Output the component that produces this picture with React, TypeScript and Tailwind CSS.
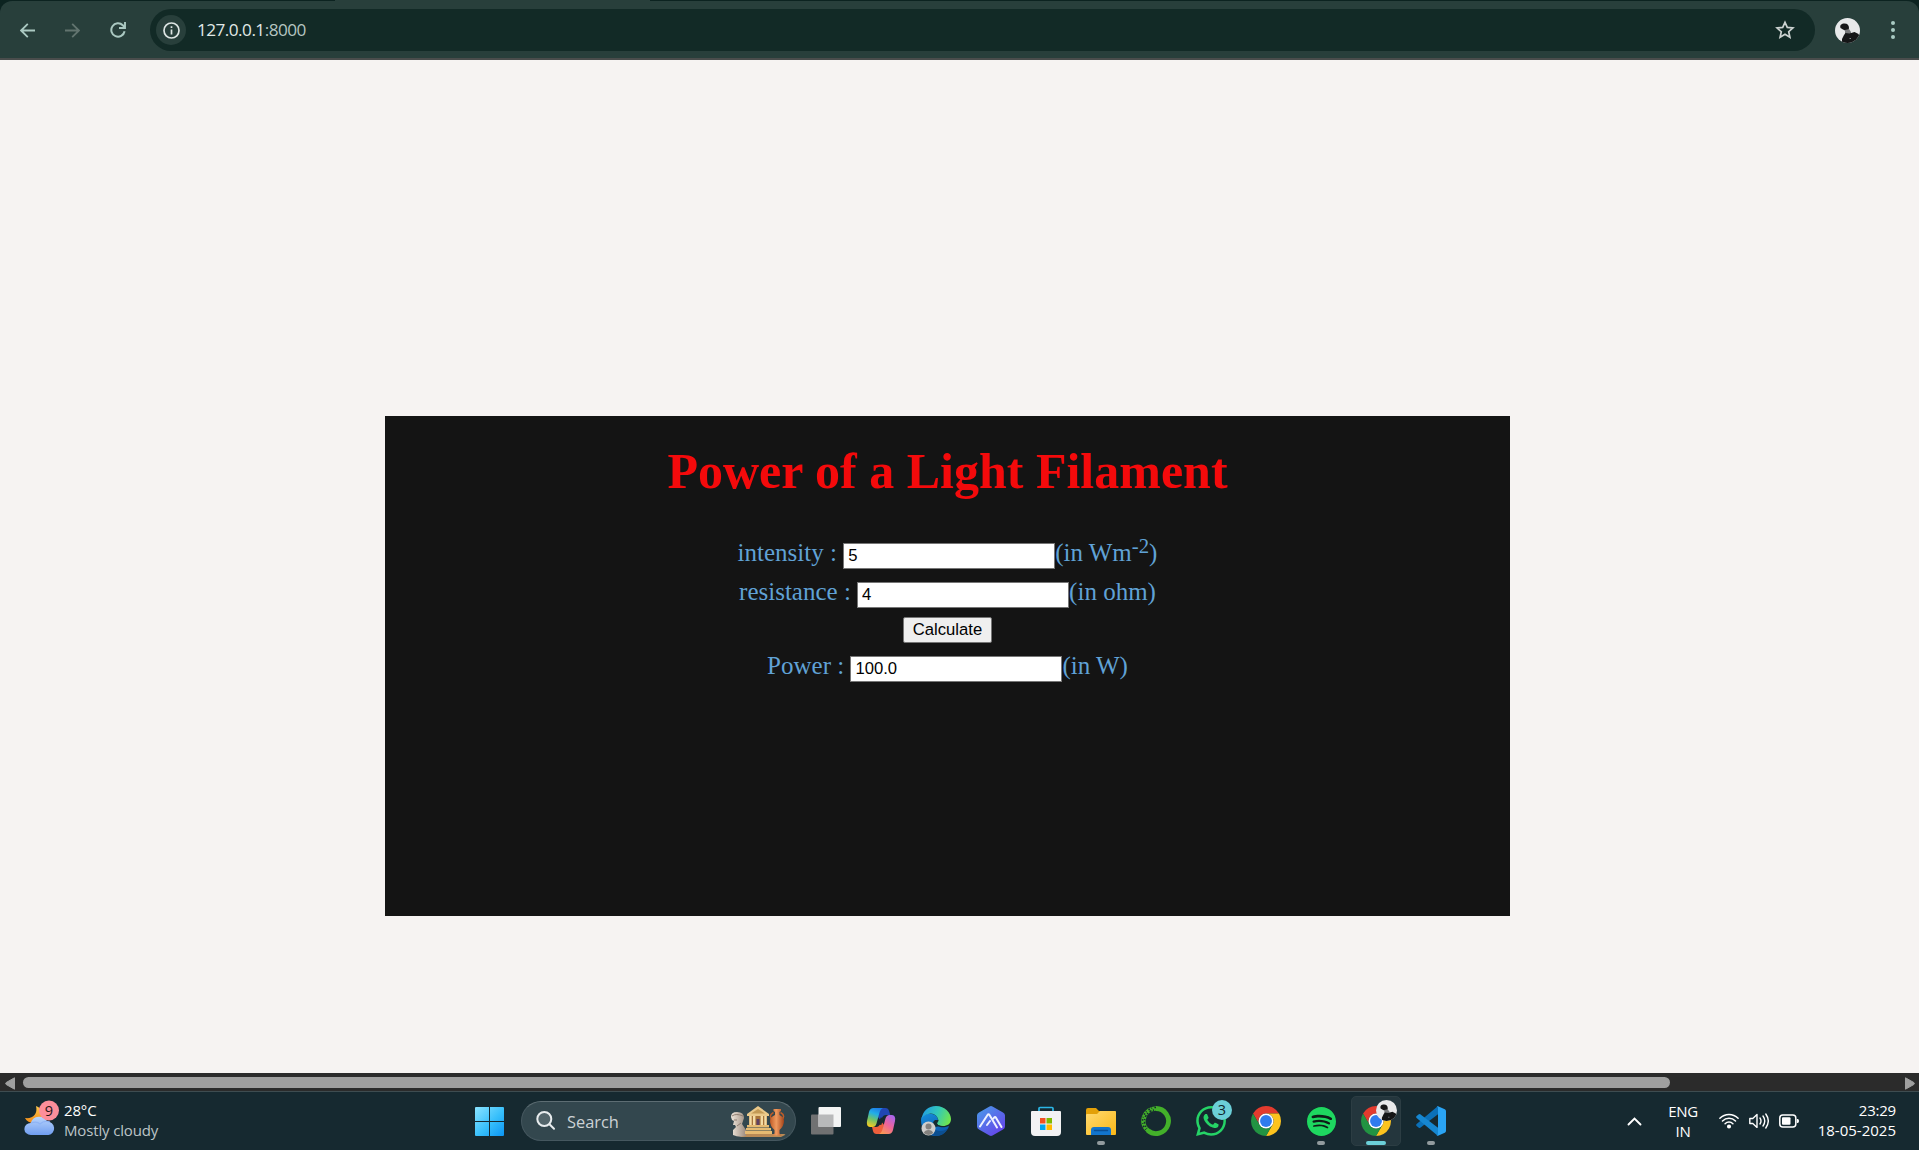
import React from "react";
import { SiSpotify, SiWhatsapp } from "react-icons/si";

function Toolbar() {
  return (
    <header className="flex h-[60px] shrink-0 flex-col bg-[#0c2320]">
      <div className="h-px shrink-0 pl-[335px]">
        <div className="h-px w-[315px] bg-[#283f3b]" />
      </div>
      <div className="flex h-[59px] items-center rounded-t-xl border-b-2 border-b-[#4a4d4c] bg-[#283f3b] pt-px">
        <svg className="ml-5 h-[15px] w-[15px] shrink-0" viewBox="0 0 15 15" fill="none" stroke="#abc9c2" strokeWidth="1.8">
          <path d="M15 7.5H1.6M7.8 .8 1.1 7.5l6.7 6.7" />
        </svg>
        <svg className="ml-[30px] h-[15px] w-[15px] shrink-0" viewBox="0 0 15 15" fill="none" stroke="#62746f" strokeWidth="1.8">
          <path d="M0 7.5h13.4M7.2 .8l6.7 6.7-6.7 6.7" />
        </svg>
        <svg className="ml-[29.5px] h-4 w-4 shrink-0" viewBox="0 0 16 16" fill="none" stroke="#abc9c2" strokeWidth="2">
          <path d="M14.6 9.3A6.7 6.7 0 1 1 12.8 3.3L14.5 5" />
          <path d="M15 0v6H9" strokeWidth="1.9" />
        </svg>
        <div className="ml-[24.5px] flex h-[42px] w-[1665px] shrink-0 items-center rounded-full bg-[#122a26] pl-[6px] pr-[20px]">
          <div className="flex h-[30px] w-[30px] items-center justify-center rounded-full bg-[#283f3b]">
            <svg className="h-[17px] w-[17px]" viewBox="0 0 17 17" fill="none" stroke="#dde5e3" strokeWidth="1.7">
              <circle cx="8.5" cy="8.5" r="7.5" />
              <path d="M8.5 7.4v5M8.5 4.2v1.8" />
            </svg>
          </div>
          <span className="ml-[11px] flex-1 whitespace-nowrap font-['Open_Sans',sans-serif] text-[17.2px] leading-[24px] tracking-[-0.54px] text-[#e1e9e7]">
            127.0.0.1<span className="text-[#b5c5c1]">:8000</span>
          </span>
          <svg className="h-5 w-5" viewBox="0 0 20 20" fill="none" stroke="#ccd3d1" strokeWidth="1.7">
            <path d="m10 2.4 2.3 5 5.6.6-4.2 3.7 1.2 5.5-4.9-2.9-4.9 2.9 1.2-5.5L2.1 8l5.6-.6Z" />
          </svg>
        </div>
        <Avatar className="ml-[20px] h-[25px] w-[25px] shrink-0" />
        <div className="ml-[30.5px] flex flex-col gap-[3px]">
          <i className="h-1 w-1 rounded-full bg-[#a9cbc3]" />
          <i className="h-1 w-1 rounded-full bg-[#a9cbc3]" />
          <i className="h-1 w-1 rounded-full bg-[#a9cbc3]" />
        </div>
      </div>
    </header>
  );
}

function Avatar({ className }: { className: string }) {
  return (
    <svg className={className + " overflow-hidden rounded-full"} viewBox="0 0 25 25">
      <rect width="25" height="25" fill="#e8e9ea" />
      <path d="M5.500 10c-1-3 1-4.500 4-4.500 3 0 4.500 2 4.500 4.500l-.5 2-3.500.5-2-1Z" fill="#171718" />
      <path d="M10 12l4-1 2 3v2h-6Z" fill="#77787a" />
      <path d="M7 25v-4l2-4 1.500-2 4 .5 5-1.500 4 2 1.500 4v5Z" fill="#151617" />
      <path d="M14.500 20.500h1.500" stroke="#85878a" />
    </svg>
  );
}

const label = "whitespace-pre text-[25px] leading-[28px] text-[#60a2d6]";

function Field({ name, value, unit, className }: { name: string; value: string; unit: React.ReactNode; className: string }) {
  return (
    <div className={"flex h-[31px] items-start justify-center " + className}>
      <span className={label}>{name} : </span>
      <input
        className="mt-[4px] h-[26px] w-[212px] border border-[#767676] bg-white px-[4px] font-['Liberation_Sans',sans-serif] text-[16.67px] leading-5 text-black"
        defaultValue={value}
      />
      <span className={label}>{unit}</span>
    </div>
  );
}

function Calculator() {
  return (
    <section className="ml-[385px] mt-[356px] flex h-[500px] w-[1125px] flex-col items-center bg-[#141414] font-['Liberation_Serif',serif]">
      <h1 className="mt-[27px] whitespace-nowrap text-[50px] font-bold leading-[56px] text-[#f40a0b]">Power of a Light Filament</h1>
      <Field
        className="mt-[40px]"
        name="intensity"
        value="5"
        unit={
          <>
            (in Wm<span className="relative top-[-8px] text-[20.8px] leading-none">-2</span>)
          </>
        }
      />
      <Field className="mt-[8px]" name="resistance" value="4" unit="(in ohm)" />
      <button className="mt-[8px] h-[26px] w-[89px] rounded-[2px] border border-[#767676] bg-[#efefef] font-['Liberation_Sans',sans-serif] text-[16.67px] leading-5 text-black">
        Calculate
      </button>
      <Field className="mt-[9px]" name="Power" value="100.0" unit="(in W)" />
    </section>
  );
}

function Scrollbar() {
  return (
    <div className="flex h-[18px] shrink-0 items-center bg-[#2b2b2b]">
      <svg className="ml-[5px] mt-[2px] h-[13px] w-[11px]" viewBox="0 0 11 13">
        <path d="M9.500 .8v11.400L1.200 7.500q-1.200-1 0-2Z" fill="#9f9f9f" stroke="#9f9f9f" />
      </svg>
      <div className="ml-[7px] h-[11px] w-[1647px] rounded-full bg-[#9f9f9f]" />
      <svg className="ml-auto mr-[4px] mt-[2px] h-[13px] w-[11px]" viewBox="0 0 11 13">
        <path d="M1.500 .8v11.400L9.800 7.500q1.200-1 0-2Z" fill="#9f9f9f" stroke="#9f9f9f" />
      </svg>
    </div>
  );
}

function Weather() {
  return (
    <div className="flex w-[475px] shrink-0 items-center">
      <svg className="mb-[5px] ml-[24px] h-10 w-9" viewBox="0 0 36 40">
        <defs>
          <linearGradient id="cloud" x1="0" y1="0" x2="0" y2="1">
            <stop offset="0" stopColor="#bad5fc" />
            <stop offset="1" stopColor="#6f9df0" />
          </linearGradient>
          <linearGradient id="moon" x1="0" y1="0" x2="0" y2="1">
            <stop offset="0" stopColor="#ffc84b" />
            <stop offset="1" stopColor="#f18a16" />
          </linearGradient>
        </defs>
        <path d="M12 7c2 8-3 13-11 12 3 6 12 7 17 1 3-5 0-11-6-13Z" fill="url(#moon)" />
        <path d="M7 36a6.500 6 0 0 1-.3-12 9 9 0 0 1 16.500-1.500A6.800 6.800 0 0 1 24.500 36Z" fill="url(#cloud)" />
        <path d="M7 24q6-2 9 1 4-4 10-2" fill="none" stroke="#8fb4f5" strokeWidth="1.200" />
        <circle cx="25" cy="11.500" r="10" fill="#fd8e9a" />
        <text x="25" y="16.800" textAnchor="middle" fontSize="14.500" fontFamily="Open Sans, sans-serif" fill="#271416">9</text>
      </svg>
      <div className="mb-[2px] ml-1 whitespace-nowrap font-['Open_Sans',sans-serif] text-[15px] leading-5 tracking-[-0.15px]">
        <div className="text-white">28°C</div>
        <div className="text-[#bcc4c7]">Mostly cloudy</div>
      </div>
    </div>
  );
}

function WindowsLogo() {
  return (
    <svg className="h-[29px] w-[29px] shrink-0" viewBox="0 0 29 29">
      <defs>
        <linearGradient id="win" x1="0" y1="0" x2="29" y2="29" gradientUnits="userSpaceOnUse">
          <stop stopColor="#8be3ff" />
          <stop offset=".55" stopColor="#37bffb" />
          <stop offset="1" stopColor="#0b95f3" />
        </linearGradient>
      </defs>
      <path d="M1 0h13v14H0V1Q0 0 1 0ZM15 0h13q1 0 1 1v13H15ZM0 15h14v14H1q-1 0-1-1ZM15 15h14v13q0 1-1 1H15Z" fill="url(#win)" />
    </svg>
  );
}

function SearchBox() {
  return (
    <div className="ml-[17px] flex h-10 w-[275px] shrink-0 items-center rounded-full border border-[#45575f] border-t-[#5d6d73] bg-[#33474e]">
      <svg className="ml-[14px] h-5 w-5" viewBox="0 0 20 20" fill="none" stroke="#e8ecee" strokeWidth="2" strokeLinecap="round">
        <circle cx="8.300" cy="8" r="7" fill="#53656b" />
        <path d="m13.500 13.300 4.500 4.400" />
      </svg>
      <span className="ml-[11px] pt-px font-['Open_Sans',sans-serif] text-[16.4px] leading-6 text-[#ccd2d5]">Search</span>
      <svg className="ml-auto mr-[9px] mt-[2px] h-[32px] w-[56px]" viewBox="0 0 56 32">
        <defs>
          <linearGradient id="vase" x1="0" x2="1">
            <stop stopColor="#c35d27" />
            <stop offset=".45" stopColor="#ef9a5f" />
            <stop offset="1" stopColor="#a54419" />
          </linearGradient>
          <linearGradient id="bust" x1="0" x2="1">
            <stop stopColor="#efe7dc" />
            <stop offset="1" stopColor="#9d8b7d" />
          </linearGradient>
        </defs>
        <path d="M14 28h40q2 0 1 1l-4 2H10Z" fill="#b98a55" />
        <path d="M1 11q0-5 6-5 7 0 7 6l-2 6 4 6v6q-7 2-13-1v-5l3-3-1-2H3l1-4-2-1Z" fill="url(#bust)" />
        <path d="M2 10q4-3 11 0M4 14h3M7 20l4-3" stroke="#8e7d70" fill="none" />
        <path d="M17 8 28 0l11 8v2H17Z" fill="#eac98a" />
        <path d="m21 7.500 7-4.500 7 4.500Z" fill="#c39a55" />
        <path d="M19 10h18v10H19Z" fill="#a8743a" />
        <path d="M20.500 10v10M24.200 10v10M31.800 10v10M35.500 10v10" stroke="#f4dca4" strokeWidth="2.400" />
        <path d="M26.500 13h3v6h-3Z" fill="#5d4163" />
        <path d="M17 19h22v2.500H17ZM16 22h25v2.500H16ZM15 25h27v3H15Z" fill="#e6bb72" />
        <path d="M43.500 6.500q-6 3.500-.5 8M50.500 6.500q6 3.500.5 8" fill="none" stroke="#be5c28" strokeWidth="1.500" />
        <path d="M43.500 3h7.500v2l-1.500 1v3q4.500 2 4.500 6 0 5-4.500 9v3.500l2 2h-9l2-2V24Q40 20 40 15q0-4 5-6V6l-1.500-1Z" fill="url(#vase)" />
      </svg>
    </div>
  );
}

function TaskView() {
  return (
    <svg className="h-[30px] w-[30px]" viewBox="0 0 30 30">
      <rect y="8.500" width="22.500" height="20" rx="1" fill="#707172" />
      <rect x="7.500" y="1" width="22.500" height="20" rx="1" fill="#f3f4f4" />
      <path d="M7.500 8.500h15V21h-15Z" fill="#b8b9ba" />
    </svg>
  );
}

function Copilot() {
  return (
    <svg className="h-[30px] w-[30px]" viewBox="0 0 30 30">
      <defs>
        <linearGradient id="cpA" x1=".6" y1="0" x2=".3" y2="1">
          <stop stopColor="#1d7fe8" />
          <stop offset=".3" stopColor="#22aee8" />
          <stop offset=".62" stopColor="#6fc36a" />
          <stop offset="1" stopColor="#f7cb20" />
        </linearGradient>
        <linearGradient id="cpB" x1=".8" y1="0" x2=".2" y2="1">
          <stop stopColor="#a765ee" />
          <stop offset=".5" stopColor="#ee6499" />
          <stop offset="1" stopColor="#fb9a51" />
        </linearGradient>
      </defs>
      <path d="M13 2h6.500q2.800 0 3.600 3l1.200 4H20q-3 0-4 3l-1 3-3-4Z" fill="#2146b4" />
      <path d="M17 28h-6.500q-2.800 0-3.500-3l-1-4h4q3 0 4-3l1-3 3 4Z" fill="#ee5f3c" />
      <path d="M7.500 2H17q-2.600 1-3.600 5l-2.900 10.500Q9.500 21 6.500 21H4q-4-.5-3-6l2-9q1-4 4.500-4Z" fill="url(#cpA)" />
      <path d="M22.500 28H13q2.600-1 3.600-5l2.900-10.500Q20.500 9 23.500 9H26q4 .5 3 6l-2 9q-1 4-4.500 4Z" fill="url(#cpB)" />
      <path d="m14.700 11.500 3 .5-2.400 7-3-.5Z" fill="#162930" />
    </svg>
  );
}

function Edge() {
  return (
    <svg className="h-[30px] w-[30px]" viewBox="0 0 30 30">
      <defs>
        <linearGradient id="edTop" x1="0" y1=".3" x2="1" y2=".6">
          <stop stopColor="#219be5" />
          <stop offset=".5" stopColor="#32c8b9" />
          <stop offset="1" stopColor="#71e64c" />
        </linearGradient>
        <linearGradient id="edLow" x1="0" y1="0" x2=".6" y2="1">
          <stop stopColor="#168fdc" />
          <stop offset="1" stopColor="#0c58ac" />
        </linearGradient>
      </defs>
      <path d="M0 14C0 9 6 7 11 8c6 1 7 6 5 9-1 3 4 6 12 3-2 6-7 10-13 10C6 30 0 24 0 14Z" fill="url(#edLow)" />
      <path d="M10 16c0 5 4 9 9 9 4 0 6-1 8-3-3 5-7 8-12 8-7-2-9-8-5-14Z" fill="#0c4f91" />
      <path d="M.4 13C2 5 7 0 15 0c9 0 15 7 15 13 0 5-4 7-8 7-4 0-6-1-6-3 1-1 1.500-2 1.300-3C17 10 12 6 7 8c-4 1-6 3-6.600 5Z" fill="url(#edTop)" />
      <path d="M17.300 14c.3 2-1.300 2-1.300 3.500 0 1 2 2 4 2.500l-6 1q-4-4 0-7Z" fill="#162930" />
      <circle cx="7.500" cy="22.500" r="7" fill="#cfcecc" />
      <circle cx="7.500" cy="20.500" r="3" fill="#83817e" />
      <path d="M2.800 27q1-3 4.700-3t4.700 3q-4.700 4-9.400 0Z" fill="#83817e" />
    </svg>
  );
}

function Hexagon() {
  return (
    <svg className="h-[30px] w-[30px]" viewBox="0 0 30 30">
      <defs>
        <linearGradient id="hex" x1="0" y1="0" x2=".8" y2="1">
          <stop stopColor="#489ee9" />
          <stop offset="1" stopColor="#6641ea" />
        </linearGradient>
      </defs>
      <path d="M13.500.5q1.500-.8 3 0l10.500 6q2 1 2 3v11q0 2-2 3l-10.500 6q-1.500.8-3 0L3 23.500q-2-1-2-3v-11q0-2 2-3Z" fill="url(#hex)" />
      <path d="m4 20.500 7.500-11.500q1-1.500 2 0L21 21.500M11 19l3-4M17.500 12.500l.8-1.200q.8-.9 1.500.2L25.500 21" fill="none" stroke="#eef1ff" strokeWidth="2" strokeLinecap="round" strokeLinejoin="round" />
    </svg>
  );
}

function Store() {
  return (
    <svg className="h-[30px] w-[30px]" viewBox="0 0 30 30">
      <path d="M8 7V2.500Q8 1.500 9 1.500h12q1 0 1 1V7" fill="none" stroke="#2bb6e5" strokeWidth="1.700" />
      <path d="M0 6q0-1 1-1h28q1 0 1 1v20q0 4-4 4H4q-4 0-4-4Z" fill="#f2f2f3" />
      <path d="M9 12h5.500v5.500H9Z" fill="#f25022" />
      <path d="M15.500 12H21v5.500h-5.500Z" fill="#7fba00" />
      <path d="M9 18.500h5.500V24H9Z" fill="#00a4ef" />
      <path d="M15.500 18.500H21V24h-5.500Z" fill="#ffb900" />
    </svg>
  );
}

function Folder() {
  return (
    <svg className="h-[30px] w-[30px]" viewBox="0 0 30 30">
      <defs>
        <linearGradient id="fold" x1="0" y1="0" x2="1" y2="1">
          <stop stopColor="#ffda72" />
          <stop offset="1" stopColor="#fbb816" />
        </linearGradient>
      </defs>
      <path d="M0 4q0-2 2-2h8l3 3h15q2 0 2 2v6H0Z" fill="#e3a008" />
      <path d="M0 9q0-1 1-1h10l3-3h15q1 0 1 1v22q0 1-1 1H1q-1 0-1-1Z" fill="url(#fold)" />
      <path d="M5 29v-5q0-3 3-3h14q3 0 3 3v5Z" fill="#1274cb" />
      <path d="M8.500 24.500h13" stroke="#0a4e93" strokeWidth="1.400" strokeLinecap="round" />
    </svg>
  );
}

function Anaconda() {
  return (
    <svg className="h-[30px] w-[30px]" viewBox="0 0 30 30" fill="none" stroke="#43b02a">
      <path d="M15 2.500A12.500 12.500 0 1 1 7 24.600" strokeWidth="4.800" />
      <path d="M15.500 2.500A12.500 12.500 0 0 0 7.500 25" strokeWidth="4.600" />
      <path d="M15 1.500A13.500 13.500 0 0 0 5 24" stroke="#162930" strokeWidth="1.500" strokeDasharray="1.600 2.300 .8 1.700" />
      <path d="M13 4A11.500 11.500 0 0 0 6 22.500" stroke="#162930" strokeWidth="1.600" strokeDasharray="1.300 1.500 2 1.900" />
    </svg>
  );
}

function WhatsApp() {
  return (
    <div className="relative">
      <SiWhatsapp className="h-[30px] w-[30px] text-[#25d366]" />
      <span className="absolute -top-[6px] left-4 flex h-5 w-5 items-center justify-center rounded-full bg-[#6bcfd8] font-['Open_Sans',sans-serif] text-[14.5px] leading-5 text-[#10262b]">
        3
      </span>
    </div>
  );
}

function Chrome() {
  return (
    <svg className="h-[30px] w-[30px]" viewBox="0 0 48 48">
      <path d="M3.220 12A24 24 0 0 1 44.780 12H24A12 12 0 0 0 13.600 30Z" fill="#e33b2e" />
      <path d="M44.780 12A24 24 0 0 1 24 48L34.400 30A12 12 0 0 0 24 12Z" fill="#fcc31e" />
      <path d="M24 48A24 24 0 0 1 3.220 12L13.600 30A12 12 0 0 0 34.400 30Z" fill="#229342" />
      <circle cx="24" cy="24" r="12" fill="#fff" />
      <circle cx="24" cy="24" r="9.500" fill="#2f7bee" />
    </svg>
  );
}

function ChromeProfile() {
  return (
    <div className="relative">
      <Chrome />
      <Avatar className="absolute -top-[6px] left-[15px] h-[21px] w-[21px]" />
    </div>
  );
}

function Spotify() {
  return (
    <div className="flex h-[29px] w-[29px] rounded-full bg-[#0e1c18]">
      <SiSpotify className="h-[29px] w-[29px] text-[#1ed760]" />
    </div>
  );
}

function VsCode() {
  return (
    <svg className="h-[30px] w-[30px]" viewBox="0 0 30 30">
      <path d="M22 0v8.300L4.300 21.800q-.8.500-1.500 0L.6 20q-1-1 0-2Z" fill="#0b70b8" />
      <path d="M22 30v-8.300L4.300 8.200q-.8-.5-1.500 0L.6 10q-1 1 0 2Z" fill="#1687d1" />
      <path d="M22 .2 28.800 3.200q1.200.6 1.200 2v19.600q0 1.400-1.200 2L22 29.800q-1 .2-1.700-.4Q22 30 22 28V2Q22 0 20.300.6 21 0 22 .2Z" fill="#2aa4f4" />
    </svg>
  );
}

const apps: { icon: () => React.ReactElement; state?: "open" | "active" }[] = [
  { icon: TaskView },
  { icon: Copilot },
  { icon: Edge },
  { icon: Hexagon },
  { icon: Store },
  { icon: Folder, state: "open" },
  { icon: Anaconda },
  { icon: WhatsApp },
  { icon: Chrome },
  { icon: Spotify, state: "open" },
  { icon: ChromeProfile, state: "active" },
  { icon: VsCode, state: "open" },
];

function Apps() {
  return (
    <div className="ml-[5px] flex shrink-0 gap-[5px]">
      {apps.map(({ icon: Icon, state }, i) => (
        <div
          key={i}
          className={
            "relative flex h-[50px] w-[50px] items-center justify-center rounded-[5px] " +
            (state === "active" ? "border border-[#2c3d43] bg-[#24363d]" : "")
          }
        >
          <Icon />
          {state === "open" && <i className="absolute bottom-[1px] left-[21px] h-1 w-2 rounded-full bg-[#929b9e]" />}
          {state === "active" && <i className="absolute bottom-0 left-[14px] h-1 w-5 rounded-full bg-[#6bcfd8]" />}
        </div>
      ))}
    </div>
  );
}

function Tray() {
  return (
    <div className="ml-auto flex items-center font-['Open_Sans',sans-serif] text-[15px] leading-5 text-white">
      <svg className="h-[9px] w-[15px]" viewBox="0 0 15 9" fill="none" stroke="#fff" strokeWidth="1.900" strokeLinecap="round">
        <path d="m1.500 7.500 6-6 6 6" />
      </svg>
      <div className="ml-[25px] w-[32px] text-center tracking-[-0.3px]">
        <div>ENG</div>
        <div>IN</div>
      </div>
      <svg className="ml-5 h-5 w-5" viewBox="0 0 20 20" fill="none" stroke="#fff" strokeWidth="1.500" strokeLinecap="round">
        <path d="M.9 7.200a13 13 0 0 1 18.200 0M3.500 10a9.300 9.300 0 0 1 13 0M6.100 12.700a5.600 5.600 0 0 1 7.800 0" />
        <circle cx="10" cy="15.500" r="1.300" fill="#fff" />
      </svg>
      <svg className="ml-[10px] h-5 w-5" viewBox="0 0 20 20" fill="none" stroke="#fff" strokeWidth="1.400" strokeLinejoin="round" strokeLinecap="round">
        <path d="M.8 7.500h3L8 3.600v12.800l-4.200-3.900h-3ZM11 7q2 3 0 6M14 5q3.500 5 0 10M16.800 3q5 7 0 14" />
      </svg>
      <svg className="ml-[10px] h-5 w-5" viewBox="0 0 20 20">
        <rect x=".8" y="4" width="16" height="12" rx="3" fill="none" stroke="#fff" strokeWidth="1.500" />
        <rect x="3" y="6.200" width="8.500" height="7.600" rx="1" fill="#fff" />
        <path d="M17.800 8h.8q1.400 0 1.400 2t-1.400 2h-.8Z" fill="#fff" />
      </svg>
      <div className="mb-[2px] ml-[18px] mr-[23px] w-[79px] whitespace-nowrap text-right">
        <div className="tracking-[-0.2px]">23:29</div>
        <div>18-05-2025</div>
      </div>
    </div>
  );
}

export default function App() {
  return (
    <div className="flex h-[1150px] w-[1919px] flex-col overflow-hidden bg-[#f6f3f2]">
      <Toolbar />
      <main className="min-h-0 flex-1">
        <Calculator />
      </main>
      <Scrollbar />
      <footer className="flex h-[59px] shrink-0 items-center border-t border-[#3e4c50] bg-[#162930]">
        <Weather />
        <WindowsLogo />
        <SearchBox />
        <Apps />
        <Tray />
      </footer>
    </div>
  );
}
